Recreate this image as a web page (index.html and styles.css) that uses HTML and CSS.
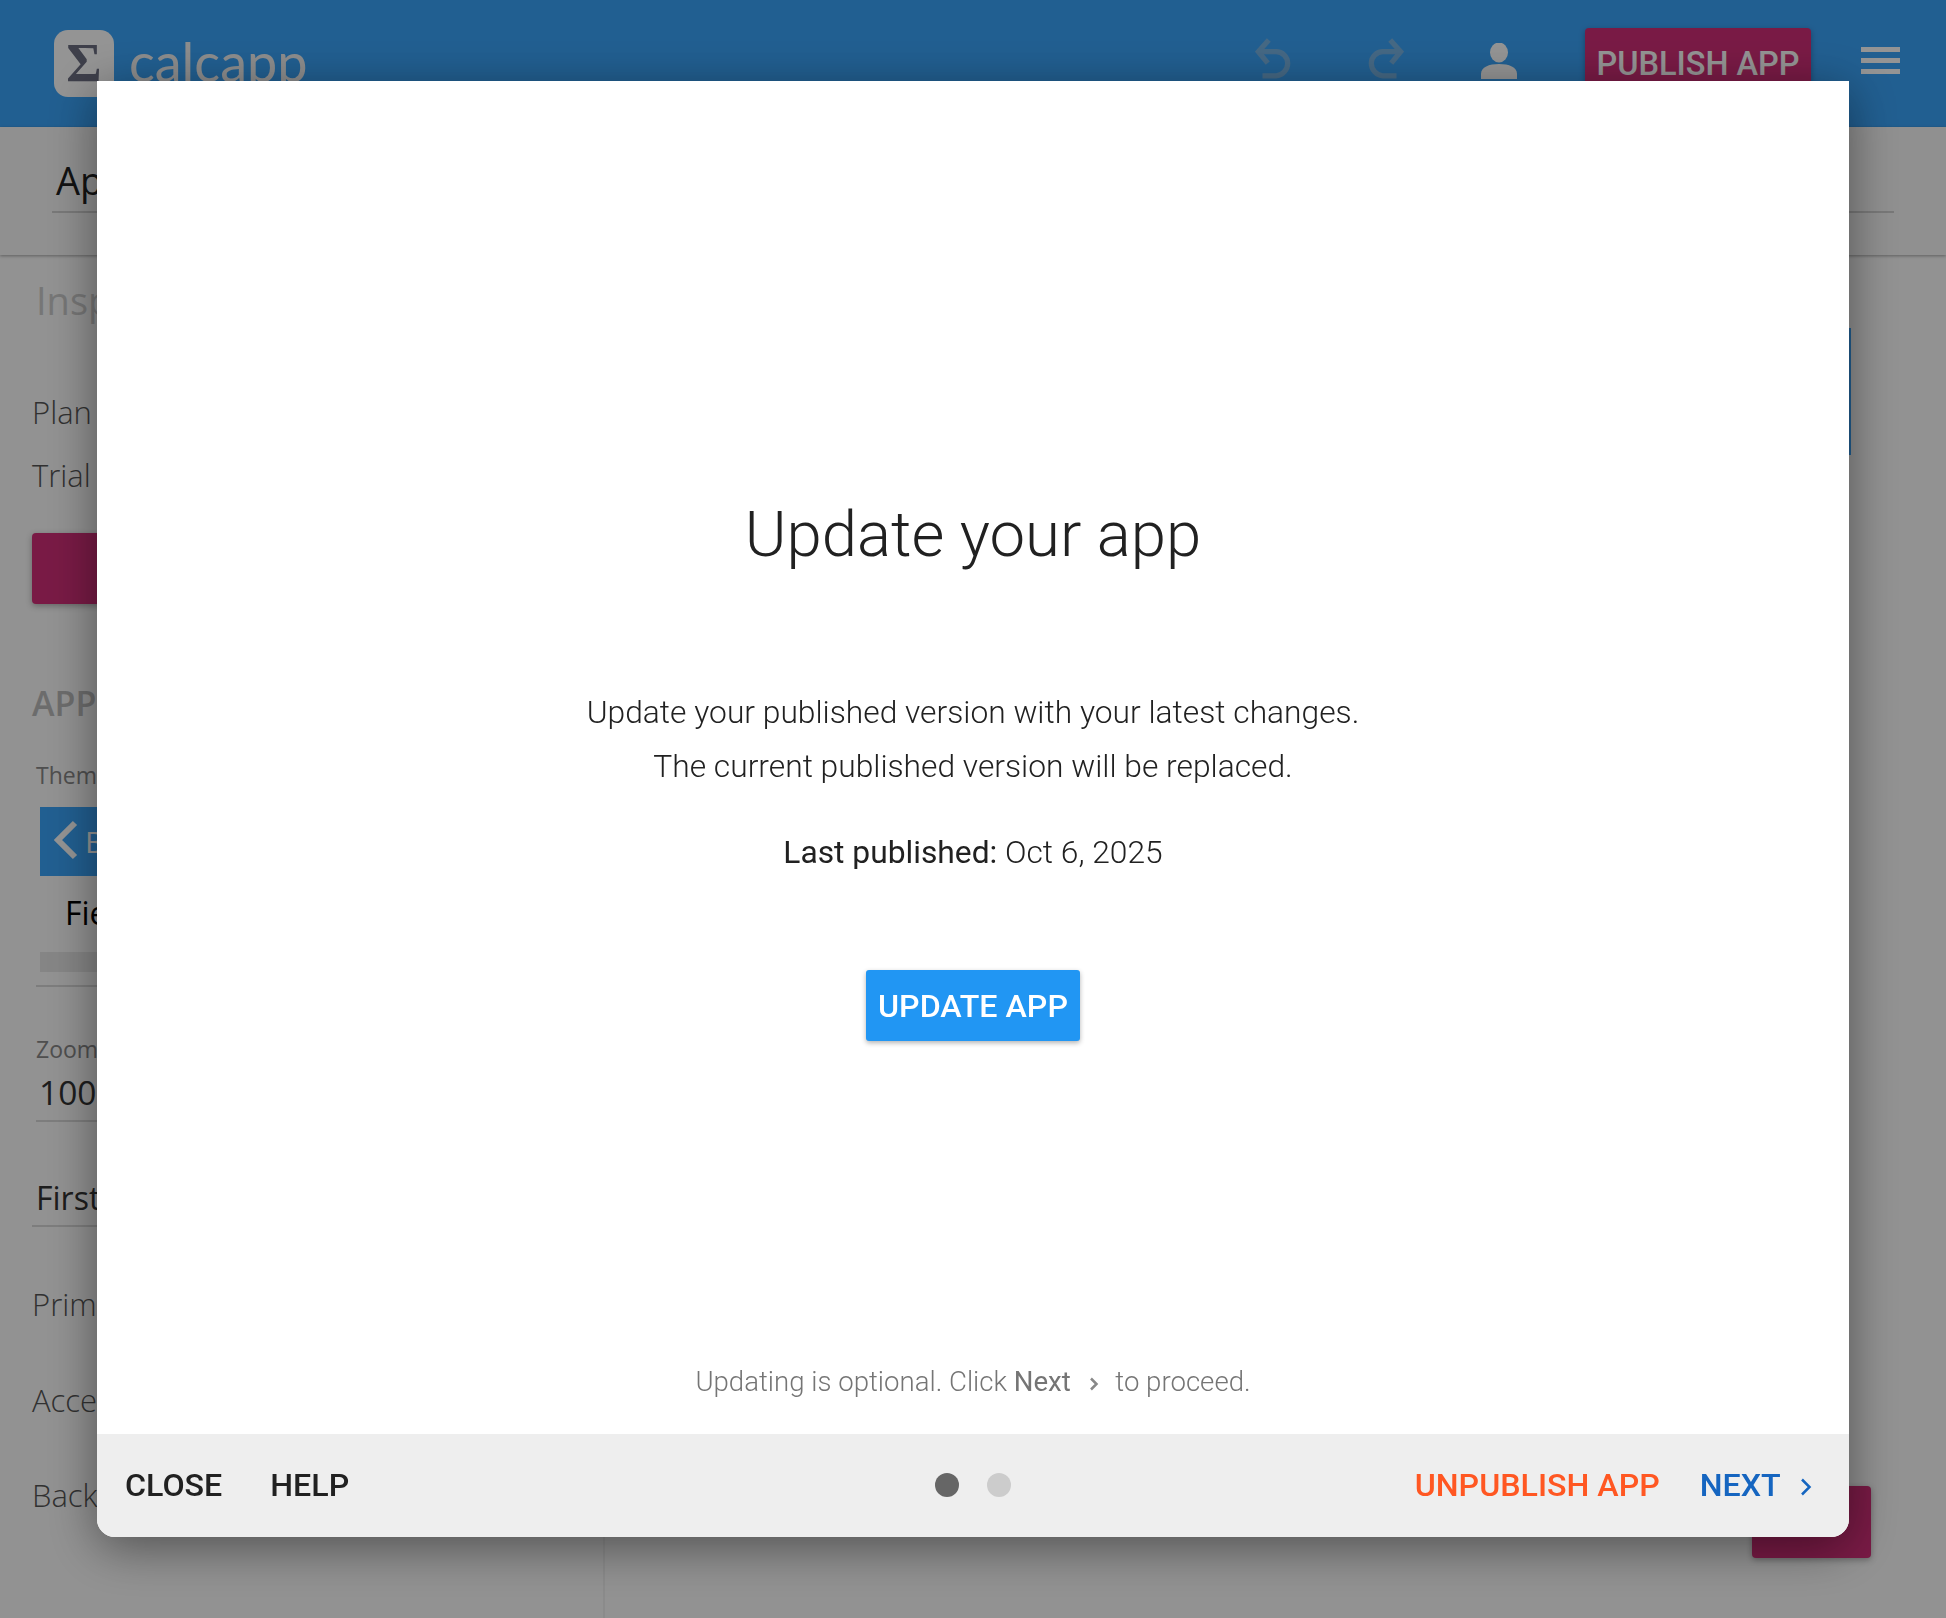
FILE: index.html
```html
<!DOCTYPE html>
<html lang="en">
<head>
    <meta charset="UTF-8">
    <meta name="viewport" content="width=device-width, initial-scale=1.0">
    <title>Calcapp - Update your app</title>
    <link rel="stylesheet" href="styles.css">
</head>
<body>
    <div class="app">
        <header class="topbar">
            <div class="logo-mark">&Sigma;</div>
            <div class="logo-name">calcapp</div>
            <div class="topbar-tools">
                <svg class="tool tool-undo" viewBox="0 0 34 40"><path d="M13 2 3 13l9 11M3 13h17c6 0 11 5 11 11s-5 12-11 12H7"/></svg>
                <svg class="tool tool-redo" viewBox="0 0 34 40"><path d="M21 2l10 11-9 11M31 13H14C8 13 3 18 3 24s5 12 11 12h13"/></svg>
                <svg class="tool tool-user" viewBox="0 0 36 36"><ellipse cx="18" cy="9.500" rx="9" ry="10"/><path d="M0 36v-5c0-7 8-10 18-10s18 3 18 10v5z"/></svg>
                <button class="publish-button">PUBLISH APP</button>
                <div class="menu-icon"><span></span><span></span><span></span></div>
            </div>
        </header>

        <div class="subbar">
            <div class="app-name">App</div>
        </div>

        <div class="workspace">
            <aside class="inspector">
                <div class="inspector-title">Inspector</div>
                <div class="info-row info-plan">Plan</div>
                <div class="info-row info-trial">Trial</div>
                <div class="inspector-button"></div>
                <div class="group-title">APP</div>
                <div class="field-label label-theme">Theme</div>
                <div class="theme-bar">
                    <svg class="theme-chevron" viewBox="0 0 24 40"><path d="M21 3 4 20l17 17"/></svg>
                    <span>Back</span>
                </div>
                <div class="theme-item">Fields</div>
                <div class="theme-scroll"></div>
                <div class="field-label label-zoom">Zoom</div>
                <div class="field-value">100%</div>
                <div class="field-first">First</div>
                <div class="info-row info-primary">Primary</div>
                <div class="info-row info-accent">Accent</div>
                <div class="info-row info-back">Back</div>
            </aside>
            <main class="canvas">
                <div class="canvas-strip"></div>
                <div class="canvas-button"></div>
            </main>
        </div>
    </div>

    <div class="overlay">
        <div class="dialog">
            <div class="dialog-body">
                <h1>Update your app</h1>
                <p class="intro">Update your published version with your latest changes.<br>The current published version will be replaced.</p>
                <p class="last-published"><strong>Last published:</strong> Oct 6, 2025</p>
                <button class="update-button">UPDATE APP</button>
                <p class="hint">Updating is optional. Click <strong>Next</strong> <svg class="hint-chevron" viewBox="0 0 10 14"><path d="M2 1.500l5.500 5.500-5.500 5.500"/></svg> to proceed.</p>
            </div>
            <footer class="dialog-footer">
                <div class="footer-left">
                    <span class="footer-link">CLOSE</span>
                    <span class="footer-link">HELP</span>
                </div>
                <div class="dots"><span class="dot dot-active"></span><span class="dot"></span></div>
                <div class="footer-right">
                    <span class="footer-link link-unpublish">UNPUBLISH APP</span>
                    <span class="footer-link link-next">NEXT <svg class="next-chevron" viewBox="0 0 12 18"><path d="M2 1.500l7.500 7.500-7.500 7.500"/></svg></span>
                </div>
            </footer>
        </div>
    </div>
</body>
</html>
```

FILE: styles.css
```css
* {
    box-sizing: border-box;
}

html, body {
    margin: 0;
    height: 100%;
    overflow: hidden;
}

body {
    font-family: 'Roboto', sans-serif;
    color: #212121;
    background: #fff;
}

button {
    font-family: inherit;
    border: none;
    cursor: pointer;
}

.app {
    height: 1618px;
    overflow: hidden;
    background: #fbfbfb;
}

/* top bar */
.topbar {
    height: 127px;
    background: #3aa4fa;
    display: flex;
    align-items: flex-start;
    padding: 30px 46px 0 54px;
}

.logo-mark {
    width: 60px;
    height: 67px;
    border-radius: 14px;
    background: #fff;
    color: #6b6d80;
    font: bold 54px/66px 'Liberation Serif', serif;
    text-align: center;
}

.logo-name {
    margin-left: 15px;
    font: 400 54px/64px 'Lato', sans-serif;
    color: #f3f3f3;
}

.topbar-tools {
    margin-left: auto;
    display: flex;
    align-items: flex-start;
}

.tool {
    fill: none;
    stroke: #78b4e4;
    stroke-width: 5;
    margin-top: 8px;
    width: 36px;
    height: 42px;
}

.tool-redo {
    margin-left: 77px;
}

.tool-user {
    stroke: none;
    fill: #fff;
    margin: 13px 0 0 77px;
    height: 36px;
}

.publish-button {
    width: 226px;
    height: 70px;
    margin: -2px 0 0 68px;
    padding: 2px 0 0;
    border-radius: 4px;
    background: #d12e78;
    color: #fff;
    font-size: 32.500px;
    font-weight: 500;
    box-shadow: 0 2px 6px rgba(0,0,0,0.3);
}

.menu-icon {
    width: 39px;
    margin: 17px 0 0 50px;
    display: flex;
    flex-direction: column;
    gap: 6px;
}

.menu-icon span {
    height: 5px;
    background: #fff;
}

/* bar under the header */
.subbar {
    height: 128px;
    padding: 29px 52px 0 52px;
    background: #f8f8f8;
    box-shadow: 0 1px 3px rgba(0,0,0,0.35);
    position: relative;
}

.app-name {
    height: 57px;
    padding-left: 4px;
    border-bottom: 2px solid #d0d0d0;
    font: 400 38px/48px 'Open Sans', sans-serif;
}

/* inspector and canvas */
.workspace {
    display: flex;
    height: 1363px;
}

.inspector {
    width: 605px;
    padding-left: 32px;
    border-right: 2px solid #efefef;
    font-family: 'Open Sans', sans-serif;
    font-weight: 300;
}

.inspector-title {
    margin: 20px 0 0 4px;
    font-size: 38px;
    line-height: 50px;
    font-weight: 400;
    color: #ccc;
}

.info-row {
    font-size: 31px;
    line-height: 40px;
    color: #555;
}

.info-plan {
    margin-top: 67px;
}

.info-trial {
    margin-top: 23px;
}

.inspector-button {
    width: 300px;
    height: 71px;
    margin-top: 38px;
    border-radius: 4px;
    background: #d12e78;
    box-shadow: 0 2px 6px rgba(0,0,0,0.3);
}

.group-title {
    margin-top: 79px;
    font: 600 34px/40px 'Open Sans', sans-serif;
    color: #bbb;
}

.field-label {
    margin-left: 4px;
    font-size: 23px;
    line-height: 30px;
    font-weight: 400;
    color: #888;
}

.label-theme {
    margin-top: 37px;
}

.theme-bar {
    width: 400px;
    height: 69px;
    margin: 17px 0 0 8px;
    padding-left: 14px;
    display: flex;
    align-items: center;
    gap: 7px;
    background: #3aa4fa;
    color: #fff;
    font-size: 30px;
    font-weight: 400;
}

.theme-chevron {
    width: 24px;
    height: 40px;
    margin-top: -4px;
    fill: none;
    stroke: #fff;
    stroke-width: 6;
}

.theme-item {
    margin: 16px 0 0 33px;
    font-size: 32px;
    line-height: 42px;
    font-weight: 400;
    color: #000;
}

.theme-scroll {
    height: 35px;
    margin: 18px 0 0 4px;
    border-bottom: 2px solid #d8d8d8;
    background: linear-gradient(#e6e6e6, #e6e6e6) no-repeat 4px 0 / 100% 20px;
}

.label-zoom {
    margin-top: 47px;
}

.field-value {
    margin-left: 4px;
    padding: 6px 0 6px 3px;
    border-bottom: 2px solid #d8d8d8;
    font-size: 33.500px;
    line-height: 44px;
    font-weight: 400;
    color: #333;
}

.field-first {
    padding: 54px 0 5px 4px;
    border-bottom: 2px solid #d8d8d8;
    font-size: 32px;
    line-height: 44px;
    font-weight: 500;
    color: #333;
}

.info-primary {
    margin-top: 57px;
}

.info-accent {
    margin-top: 56px;
}

.info-back {
    margin-top: 55px;
}

.canvas {
    flex: 1;
    position: relative;
}

.canvas-strip {
    width: 1246px;
    height: 127px;
    margin-top: 73px;
    background: #3aa4fa;
}

.canvas-button {
    position: absolute;
    left: 1147px;
    top: 1231px;
    width: 119px;
    height: 72px;
    border-radius: 4px;
    background: #d12e78;
    box-shadow: 0 2px 6px rgba(0,0,0,0.3);
}

/* dialog over the dimmed app */
.overlay {
    position: fixed;
    inset: 0;
    padding: 81px 97px 81px;
    background: rgba(0,0,0,0.42);
}

.dialog {
    height: 100%;
    display: flex;
    flex-direction: column;
    background: #fff;
    border-radius: 0 0 18px 18px;
    overflow: hidden;
    box-shadow: 0 10px 50px rgba(0,0,0,0.45);
}

.dialog-body {
    flex: 1;
    display: flex;
    flex-direction: column;
    align-items: center;
    text-align: center;
    padding-top: 414px;
}

.dialog-body h1 {
    margin: 0;
    font-size: 63.500px;
    line-height: 80px;
    font-weight: 300;
}

.intro {
    margin: 111px 0 0;
    font-size: 31.750px;
    line-height: 54px;
    font-weight: 300;
}

.last-published {
    margin: 32px 0 0;
    font-size: 31.750px;
    line-height: 54px;
    font-weight: 300;
}

.last-published strong {
    font-weight: 400;
}

.update-button {
    width: 214px;
    height: 71px;
    margin-top: 90px;
    border-radius: 3px;
    background: #2196f3;
    color: #fff;
    font-size: 32.200px;
    font-weight: 500;
    box-shadow: 0 2px 5px rgba(0,0,0,0.3);
}

.hint {
    margin: auto 0 0;
    padding-bottom: 33px;
    font-size: 27.600px;
    line-height: 38px;
    font-weight: 300;
    color: #757575;
}

.hint strong {
    font-weight: 400;
}

.hint-chevron {
    width: 10px;
    height: 14px;
    margin: 0 10px 0 11px;
    fill: none;
    stroke: #888;
    stroke-width: 2.500;
}

.dialog-footer {
    height: 103px;
    padding: 0 28px 2px;
    display: grid;
    grid-template-columns: 1fr auto 1fr;
    align-items: center;
    background: #eee;
}

.footer-left {
    display: flex;
    gap: 48px;
}

.footer-right {
    display: flex;
    justify-content: flex-end;
    gap: 40px;
    padding-right: 9px;
}

.footer-link {
    font-size: 32.200px;
    font-weight: 500;
    color: #212121;
}

.link-unpublish {
    color: #ff5722;
}

.link-next {
    color: #1565c0;
}

.next-chevron {
    width: 12px;
    height: 18px;
    margin-left: 12px;
    fill: none;
    stroke: #1565c0;
    stroke-width: 2.500;
}

.dots {
    display: flex;
    gap: 28px;
}

.dot {
    width: 24px;
    height: 24px;
    border-radius: 50%;
    background: #ccc;
}

.dot-active {
    background: #666;
}
```
